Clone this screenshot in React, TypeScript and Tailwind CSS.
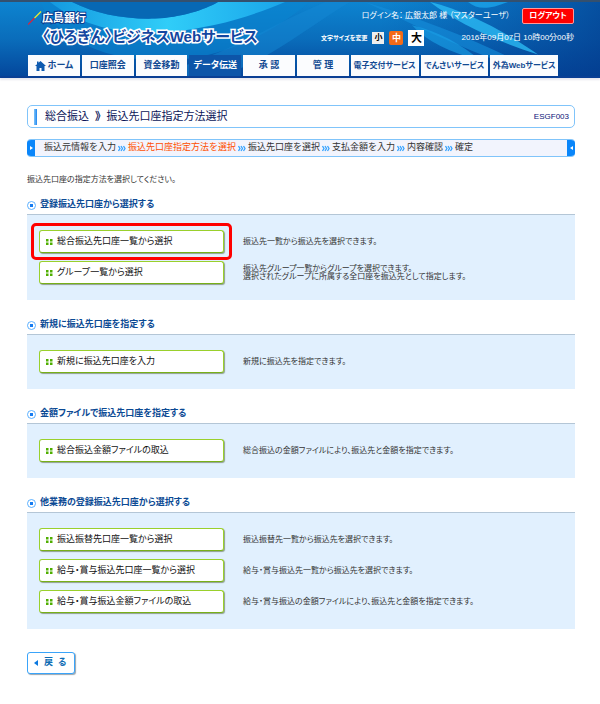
import React from "react";

type Row = { label: string; lines: string[]; marked?: boolean };
type Section = { title: string; rows: Row[] };

const tabs: { label: string; wide?: boolean; active?: boolean; home?: boolean }[] = [
  { label: "ホーム", home: true },
  { label: "口座照会" },
  { label: "資金移動" },
  { label: "データ伝送", active: true },
  { label: "承 認" },
  { label: "管 理" },
  { label: "電子交付サービス", wide: true },
  { label: "でんさいサービス", wide: true },
  { label: "外為Webサービス", wide: true },
];

const steps = [
  "振込元情報を入力",
  "振込先口座指定方法を選択",
  "振込先口座を選択",
  "支払金額を入力",
  "内容確認",
  "確定",
];

const sections: Section[] = [
  {
    title: "登録振込先口座から選択する",
    rows: [
      { label: "総合振込先口座一覧から選択", lines: ["振込先一覧から振込先を選択できます。"], marked: true },
      {
        label: "グループ一覧から選択",
        lines: [
          "振込先グループ一覧からグループを選択できます。",
          "選択されたグループに所属する全口座を振込先として指定します。",
        ],
      },
    ],
  },
  {
    title: "新規に振込先口座を指定する",
    rows: [{ label: "新規に振込先口座を入力", lines: ["新規に振込先を指定できます。"] }],
  },
  {
    title: "金額ファイルで振込先口座を指定する",
    rows: [
      {
        label: "総合振込金額ファイルの取込",
        lines: ["総合振込の金額ファイルにより、振込先と金額を指定できます。"],
      },
    ],
  },
  {
    title: "他業務の登録振込先口座から選択する",
    rows: [
      { label: "振込振替先口座一覧から選択", lines: ["振込振替先一覧から振込先を選択できます。"] },
      { label: "給与・賞与振込先口座一覧から選択", lines: ["給与・賞与振込先一覧から振込先を選択できます。"] },
      {
        label: "給与・賞与振込金額ファイルの取込",
        lines: ["給与・賞与振込の金額ファイルにより、振込先と金額を指定できます。"],
      },
    ],
  },
];

function HeaderArt() {
  return (
    <svg className="absolute inset-0 h-full w-full" viewBox="0 0 600 76" preserveAspectRatio="none" aria-hidden="true">
      <defs>
        <linearGradient id="sky" x1="0" y1="0" x2="0" y2="1">
          <stop offset="0" stopColor="#0d84d0" />
          <stop offset="0.5" stopColor="#0a6dbb" />
          <stop offset="1" stopColor="#04479c" />
        </linearGradient>
        <linearGradient id="wave" x1="0" y1="0" x2="1" y2="0">
          <stop offset="0" stopColor="#1499e0" />
          <stop offset="0.5" stopColor="#30cdf8" />
          <stop offset="1" stopColor="#1aa5ea" />
        </linearGradient>
        <linearGradient id="deep" x1="0" y1="0" x2="1" y2="0">
          <stop offset="0" stopColor="#04479c" stopOpacity="0" />
          <stop offset="1" stopColor="#033a8c" stopOpacity="0.7" />
        </linearGradient>
      </defs>
      <rect width="600" height="76" fill="url(#sky)" />
      <rect x="380" width="220" height="76" fill="url(#deep)" />
      <path d="M40 0C64 50 130 66 190 58C240 50 280 25 310 0Z" fill="#0a86d0" opacity="0.6" />
      <path d="M50 0C80 24 120 34 165 31C215 27 255 13 285 0H218C205 8 180 16 155 17C125 18 95 12 72 0Z" fill="url(#wave)" />
      <path d="M72 0C95 12 125 18 155 17C180 16 205 8 218 0Z" fill="#0768b4" />
      <path d="M150 76C220 58 270 24 325 0H350C310 24 270 60 220 76Z" fill="#1488d3" opacity="0.5" />
      <path d="M365 0C430 20 490 44 545 76C480 58 420 26 365 0Z" fill="#1590dc" opacity="0.6" />
      <path d="M430 0C470 10 510 34 538 54C495 40 455 20 430 0Z" fill="#2bb9f3" opacity="0.8" />
      <path d="M468 0H508C488 8 478 8 468 0Z" fill="#1ba4ea" opacity="0.8" />
      <path d="M412 24C438 30 462 44 480 60C450 52 426 40 412 24Z" fill="#1ba4ea" opacity="0.6" />
    </svg>
  );
}

function StepMark() {
  return (
    <svg width="8" height="7" viewBox="0 0 8 7" className="mx-0.5 shrink-0" fill="none" stroke="#38a4ff" strokeWidth="1.300" aria-hidden="true">
      <path d="M.5 1l1.5 2.5L.5 6M3 1l1.5 2.5L3 6M5.500 1L7 3.500L5.500 6" />
    </svg>
  );
}

function OptionRow({ row }: { row: Row }) {
  return (
    <div className="relative flex items-center">
      {row.marked && (
        <span className="pointer-events-none absolute -top-[7px] -left-2 h-[37px] w-[201px] rounded-[5px] border-[3px] border-[#f00]" />
      )}
      <button
        type="button"
        className="flex h-[23px] w-[185px] shrink-0 items-center gap-1 rounded-[3px] border border-[#9ad02c] border-b-[#78b018] bg-white pl-1.5 text-[9px] text-[#111] shadow-[1px_1px_1px_#8ea08c]"
      >
        <svg width="7" height="6" viewBox="0 0 7 6" fill="#4fae00" aria-hidden="true">
          <path d="M0 0h2.500v2.500H0zM4 0h2.500v2.500H4zM0 3.500h2.500V6H0zM4 3.500h2.500V6H4z" />
        </svg>
        {row.label}
      </button>
      <p className="ml-[19px] text-[8px] leading-[8px] text-[#333]">
        {row.lines.map((line) => (
          <span key={line} className="block whitespace-nowrap">
            {line}
          </span>
        ))}
      </p>
    </div>
  );
}

function OptionSection({ section }: { section: Section }) {
  return (
    <section className="mb-4">
      <h2 className="flex h-[18px] items-center gap-1 text-[9px] font-bold text-[#0b4a94]">
        <svg width="9" height="9" viewBox="0 0 9 9" aria-hidden="true">
          <circle cx="4.5" cy="4.5" r="4" fill="#fff" stroke="#4aa8ff" strokeWidth=".9" />
          <rect x="3" y="3" width="3" height="3" fill="#167cf0" />
        </svg>
        {section.title}
      </h2>
      <div className="flex flex-col gap-2 border-t border-[#b4c6d6] bg-[#e1f0fe] px-3 pt-[15px] pb-4">
        {section.rows.map((row) => (
          <OptionRow key={row.label} row={row} />
        ))}
      </div>
    </section>
  );
}

export default function App() {
  return (
    <div className="min-h-screen bg-white font-['Liberation_Sans','Noto_Sans_CJK_JP',sans-serif] [font-feature-settings:'palt']">
      <header className="relative h-[78px] border-t-2 border-b-2 border-t-[#34506e] border-b-[#0a3f94] shadow-[0_2px_2px_#e8e8ee]">
        <HeaderArt />
        <div className="relative flex h-full flex-col justify-between pl-7">
          <div className="flex items-start justify-between pr-[26px]">
            <div className="flex pt-2">
              <svg width="14" height="16" viewBox="0 0 15 16" fill="none" strokeWidth="1.300" aria-hidden="true">
                <path d="M0 15L7 8" stroke="#e0203a" />
                <path d="M7 8L14 1" stroke="#e8ec30" />
              </svg>
              <h1 className="font-bold whitespace-nowrap [paint-order:stroke]">
                <span className="block text-[11px] leading-[16px] text-white [-webkit-text-stroke:2px_#0b3f92]">広島銀行</span>
                <span className="block text-[15px] leading-[22px] text-[#1446a0] [-webkit-text-stroke:3px_#fff]">
                  〈ひろぎん〉ビジネスWebサービス
                </span>
              </h1>
            </div>
            <div className="pt-1.5 text-white">
              <div className="flex h-4 items-center justify-end gap-3">
                <span className="text-[8px] whitespace-nowrap">ログイン名： 広銀太郎 様 （マスターユーザ）</span>
                <button type="button" className="h-4 w-[52px] rounded-xs border border-[#f99] bg-[#f00] text-[8px] leading-none font-bold">
                  ログアウト
                </button>
              </div>
              <div className="mt-1.5 flex h-4 items-center justify-end gap-[5px] text-[6px] font-bold whitespace-nowrap">
                <span>文字サイズを変更</span>
                <button type="button" className="h-3 w-3 bg-[#eee] text-[8px] leading-none text-black">小</button>
                <button type="button" className="h-[14px] w-[14px] rounded-xs bg-[#f36a18] text-[9px] leading-none">中</button>
                <button type="button" className="h-4 w-4 bg-white text-[11px] leading-none text-black">大</button>
                <time className="ml-8 text-[8px] font-normal">2016年09月07日 10時00分00秒</time>
              </div>
            </div>
          </div>
          <nav className="grid w-[530px] grid-cols-[repeat(6,52fr)_repeat(3,68fr)] gap-0.5">
            {tabs.map((tab) => (
              <a
                key={tab.label}
                href="#"
                className={`flex h-[21px] min-w-0 items-center justify-center gap-0.5 font-bold whitespace-nowrap ${
                  tab.wide ? "text-[8px]" : "text-[9px]"
                } ${tab.active ? "bg-[#0d55a8] text-white" : "bg-[#fbfcfe] text-[#124a92]"}`}
              >
                {tab.home && (
                  <svg width="11" height="10" viewBox="0 0 11 10" fill="#0d5ab0" aria-hidden="true">
                    <path d="M5.500 0L11 5H9.500V10H6.500V7H4.500V10H1.500V5H0L2 3.200V.5H3.500V1.800Z" />
                  </svg>
                )}
                {tab.label}
              </a>
            ))}
          </nav>
        </div>
      </header>

      <main className="mr-[25px] ml-[27px] pt-[27px]">
        <div className="flex h-[23px] items-center justify-between rounded-[5px] border border-[#80c4fa] px-[5px]">
          <div className="flex items-center gap-2">
            <span className="ml-px h-4 w-[3px] bg-gradient-to-r from-[#7cc4fa] to-[#1a86ee]" />
            <p className="text-[11px] whitespace-nowrap text-[#0a1458]">
              総合振込<span className="mx-1.5 font-bold">》</span>振込先口座指定方法選択
            </p>
          </div>
          <span className="text-[8px] text-[#0a1478]">ESGF003</span>
        </div>

        <div className="mt-[11px] flex h-[18px] items-stretch overflow-hidden rounded-sm border-y border-[#80c4fa] bg-[#f2f4fd]">
          <span className="flex w-2 items-center justify-center bg-[#0a86fa]">
            <svg width="3" height="4" viewBox="0 0 3 4" fill="#fff" aria-hidden="true"><path d="M0 0L3 2L0 4Z" /></svg>
          </span>
          <ol className="flex flex-1 items-center pl-[9px] text-[9px] whitespace-nowrap text-[#333] [font-feature-settings:normal]">
            {steps.map((step, i) => (
              <li key={step} className={i === 1 ? "flex items-center text-[#ff5000]" : "flex items-center"}>
                {i > 0 && <StepMark />}
                {step}
              </li>
            ))}
          </ol>
          <span className="flex w-2 items-center justify-center bg-[#0a86fa]">
            <svg width="3" height="4" viewBox="0 0 3 4" fill="#fff" aria-hidden="true"><path d="M3 0L0 2L3 4Z" /></svg>
          </span>
        </div>

        <p className="mt-4 mb-[10px] text-[8px] leading-[13px] text-[#333]">振込先口座の指定方法を選択してください。</p>

        {sections.map((section) => (
          <OptionSection key={section.title} section={section} />
        ))}

        <button
          type="button"
          className="mt-[23px] flex h-[22px] w-12 items-center gap-1.5 rounded-[3px] border border-[#3aa4fa] bg-white pl-1.5 text-[9px] font-bold text-[#0d6cb4] shadow-[1px_1px_1px_#98a6b0]"
        >
          <svg width="4" height="6" viewBox="0 0 4 6" fill="#0a78e0" aria-hidden="true"><path d="M4 0L0 3L4 6Z" /></svg>
          <span className="whitespace-pre">戻  る</span>
        </button>
      </main>
    </div>
  );
}
